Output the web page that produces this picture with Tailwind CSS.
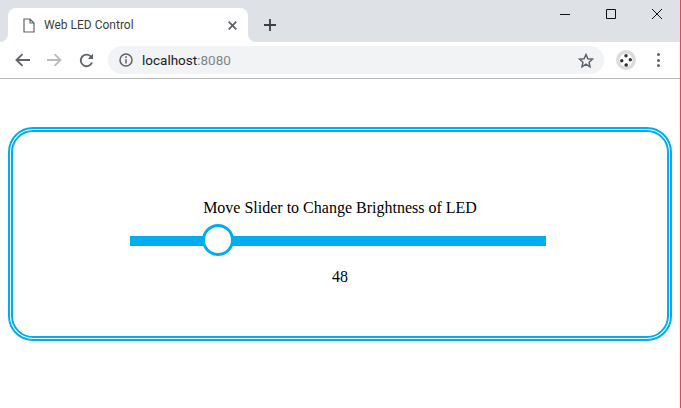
<!DOCTYPE html>
<html lang="en">
<head>
  <meta charset="UTF-8" />
  <title>Web LED Control</title>
  <script src="https://cdn.jsdelivr.net/npm/@tailwindcss/browser@4"></script>
</head>
<body class="bg-white text-black h-[408px] w-[681px] overflow-hidden border-r border-[#e8434f] font-['Liberation_Serif',serif]">

  <!-- TAB STRIP -->
  <div class="h-[42px] bg-[#dee1e6] flex items-end pl-[8px]">
    <div class="relative w-[240px] h-[34px] bg-white rounded-t-[8px] flex items-center pl-[15px] pr-[11px] text-[#3c4043]">
      <svg class="absolute left-[-8px] bottom-0" width="8" height="8" viewBox="0 0 8 8"><path d="M8 0v8H0a8 8 0 0 0 8-8z" fill="#fff"/></svg>
      <svg class="absolute right-[-8px] bottom-0" width="8" height="8" viewBox="0 0 8 8"><path d="M0 0v8h8a8 8 0 0 1-8-8z" fill="#fff"/></svg>
      <svg width="12" height="15" viewBox="0 0 12 15" fill="none" stroke="#5f6368" stroke-width="1.2"><path d="M1 1h6l4 4v9H1zM7 1v4h4"/></svg>
      <span class="ml-[9px] flex-1 font-['Roboto',sans-serif] text-[12px]">Web LED Control</span>
      <svg width="9" height="9" viewBox="0 0 9 9" stroke="#5f6368" stroke-width="1.800"><path d="M.7.700l7.600 7.600M8.300.700L.7 8.300"/></svg>
      <svg class="absolute left-[256px] top-[11px]" width="12" height="12" viewBox="0 0 12 12" stroke="#3c4043" stroke-width="1.800"><path d="M6 0v12M0 6h12"/></svg>
    </div>
    <!-- window buttons -->
    <div class="ml-auto self-start flex items-center gap-[36px] pr-[18px] pt-[9px]">
      <svg width="10" height="10" viewBox="0 0 10 10" stroke="#111" stroke-width="1"><path d="M0 5.500h10"/></svg>
      <svg width="10" height="10" viewBox="0 0 10 10" fill="none" stroke="#111" stroke-width="1"><path d="M.5.500h9v9h-9z"/></svg>
      <svg width="10" height="10" viewBox="0 0 10 10" stroke="#111" stroke-width="1"><path d="M0 0l10 10M10 0L0 10"/></svg>
    </div>
  </div>

  <!-- TOOLBAR -->
  <div class="h-[36px] border-b border-[#b8b8b8] flex items-center pl-[15px] pr-[20px] box-content font-['Roboto',sans-serif]">
    <svg width="15" height="14" viewBox="0 0 15 14" fill="none" stroke="#5f6368" stroke-width="1.800"><path d="M15 7H2M7.500 1.200L1.500 7l6 5.800"/></svg>
    <svg class="ml-[17px]" width="15" height="14" viewBox="0 0 15 14" fill="none" stroke="#b8babc" stroke-width="1.800"><path d="M0 7h13M7.500 1.200l6 5.800-6 5.800"/></svg>
    <svg class="ml-[17px]" width="15" height="15" viewBox="0 0 15 15" fill="none" stroke="#5f6368" stroke-width="1.900"><path d="M13 9.500A5.800 5.800 0 1 1 11.700 3.300L13.500 5"/><path d="M14 .8v5.200H8.800z" fill="#5f6368" stroke="none"/></svg>
    <div class="ml-[14px] w-[496px] h-[28px] bg-[#f1f3f4] rounded-full flex items-center pl-[11px] pr-[10px] text-[13.5px]">
      <svg width="14" height="14" viewBox="0 0 14 14" fill="none" stroke="#5f6368" stroke-width="1.500"><circle cx="7" cy="7" r="6"/><path d="M7 6.200v4.300M7 3.300v1.700"/></svg>
      <span class="ml-[9px] flex-1 text-[#202124]">localhost<span class="text-[#80868b]">:8080</span></span>
      <svg width="16" height="15" viewBox="0 0 16 15" fill="none" stroke="#5f6368" stroke-width="1.500"><path d="M8 1.500l1.900 4.200 4.600.5-3.400 3.100.9 4.500L8 11.100l-4 2.700.9-4.500L1.500 6.200l4.600-.5z"/></svg>
    </div>
    <div class="ml-[12px] w-[20px] h-[20px] rounded-full bg-[#dcdcdc] flex items-center justify-center">
      <svg width="14" height="14" viewBox="0 0 14 14"><circle cx="7" cy="7" r="6.500" fill="#fff"/><circle cx="7" cy="2.800" r="1.700" fill="#333"/><circle cx="2.800" cy="7.800" r="1.700" fill="#333"/><circle cx="11.300" cy="6.800" r="1.700" fill="#333"/><circle cx="7.200" cy="12" r="1.800" fill="#333"/></svg>
    </div>
    <div class="ml-auto flex flex-col gap-[2.500px]">
      <span class="block w-[3px] h-[3px] rounded-full bg-[#5f6368]"></span>
      <span class="block w-[3px] h-[3px] rounded-full bg-[#5f6368]"></span>
      <span class="block w-[3px] h-[3px] rounded-full bg-[#5f6368]"></span>
    </div>
  </div>

  <!-- PAGE -->
  <div class="pt-[48px] pl-[8px]">
    <div class="w-[664px] h-[214px] border-[5px] border-double border-[#00aeef] rounded-[25px] flex flex-col items-center pt-[67px] text-[16px] leading-[18px]">
      <p>Move Slider to Change Brightness of LED</p>
      <div class="relative w-[416px] h-[10px] bg-[#00aeef] mt-[19px] mr-[4px]">
        <span class="absolute left-[72px] top-[-12px] w-[32px] h-[32px] rounded-full bg-white border-[3px] border-[#00aeef]"></span>
      </div>
      <p class="mt-[22px]">48</p>
    </div>
  </div>

</body>
</html>
